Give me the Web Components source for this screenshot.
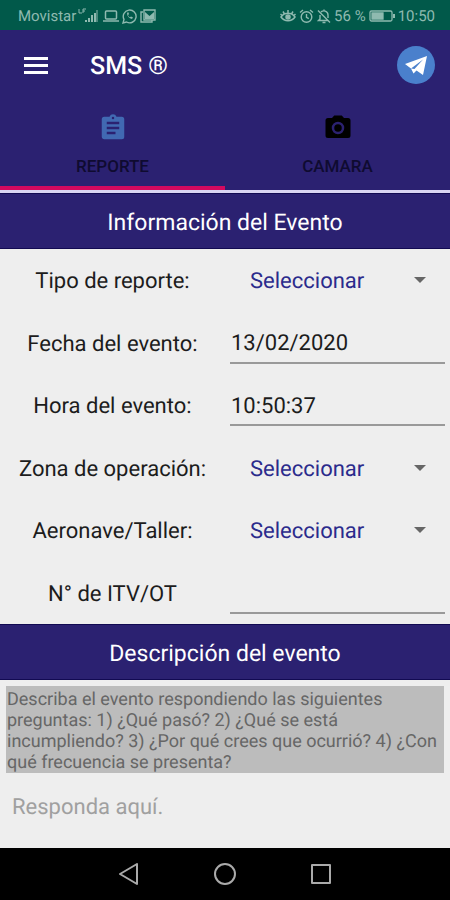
<!DOCTYPE html>
<html lang="es">
<head>
<meta charset="utf-8">
<meta name="viewport" content="width=device-width, initial-scale=1">
<title>SMS ®</title>
<style>
  html, body {
    height: 100%;
    margin: 0;
  }
  body {
    font-family: Roboto, "Liberation Sans", sans-serif;
    text-rendering: geometricPrecision;
    background: #eee;
    color: #1c1c1c;
    --primary: #2b2171;
    --accent: #d4095f;
    --line: #d9d5f2;
  }
</style>
</head>
<body>
<sms-app>
  <status-bar slot="top" carrier="Movistar" battery="56 %" time="10:50"></status-bar>
  <app-bar slot="top" heading="SMS ®"></app-bar>
  <tab-bar slot="top">
    <tab-item label="REPORTE" active>
      <svg width="30" height="30" viewBox="0 0 24 24" fill="#4169b2"><path d="M19 3h-4.2a3 3 0 0 0-5.6 0H5a2 2 0 0 0-2 2v14c0 1.100.9 2 2 2h14a2 2 0 0 0 2-2V5a2 2 0 0 0-2-2zm-7 0a1 1 0 1 1 0 2 1 1 0 0 1 0-2zm2 14H7v-2h7zm3-4H7v-2h10zm0-4H7V7h10z"/></svg>
    </tab-item>
    <tab-item label="CAMARA">
      <svg width="30" height="30" viewBox="0 0 24 24" fill="#000"><circle cx="12" cy="12" r="3.200" fill="none"/><path d="M9 2 7.200 4H4a2 2 0 0 0-2 2v12a2 2 0 0 0 2 2h16a2 2 0 0 0 2-2V6a2 2 0 0 0-2-2h-3.200L15 2zm3 15a5 5 0 1 1 0-10 5 5 0 0 1 0 10z"/><circle cx="12" cy="12" r="3"/></svg>
    </tab-item>
  </tab-bar>

  <section-title>Información del Evento</section-title>
  <event-form>
    <form-row label="Tipo de reporte:" type="select" value="Seleccionar"></form-row>
    <form-row label="Fecha del evento:" value="13/02/2020"></form-row>
    <form-row label="Hora del evento:" value="10:50:37"></form-row>
    <form-row label="Zona de operación:" type="select" value="Seleccionar"></form-row>
    <form-row label="Aeronave/Taller:" type="select" value="Seleccionar"></form-row>
    <form-row label="N° de ITV/OT"></form-row>
  </event-form>
  <section-title>Descripción del evento</section-title>
  <event-description placeholder="Responda aquí.">Describa el evento respondiendo las siguientes preguntas: 1) ¿Qué pasó? 2) ¿Qué se está incumpliendo? 3) ¿Por qué crees que ocurrió? 4) ¿Con qué frecuencia se presenta?</event-description>

  <nav-bar slot="bottom"></nav-bar>
</sms-app>

<script>
// Small base class: attaches the shadow root and fills it with render()
class BaseElement extends HTMLElement {
  constructor() {
    super();
    this.attachShadow({ mode: 'open' });
  }

  connectedCallback() {
    this.shadowRoot.innerHTML = this.render();
  }

  attr(name) {
    return this.getAttribute(name) || '';
  }
}

class SmsApp extends BaseElement {
  render() {
    return `
      <style>
        :host {
          display: flex;
          flex-direction: column;
          height: 100%;
        }
        main {
          flex: 1;
          min-height: 0;
          overflow: hidden;
          display: flex;
          flex-direction: column;
        }
      </style>
      <slot name="top"></slot>
      <main><slot></slot></main>
      <slot name="bottom"></slot>
    `;
  }
}

class StatusBar extends BaseElement {
  render() {
    return `
      <style>
        :host {
          display: flex;
          justify-content: space-between;
          align-items: center;
          flex: none;
          height: 30px;
          padding: 2px 15px 0 18px;
          box-sizing: border-box;
          background: #01594a;
          color: #8fbab0;
          font-size: 15px;
        }
        div {
          display: flex;
          align-items: center;
          gap: 3px;
        }
        .carrier {
          gap: 2px;
        }
        svg {
          display: block;
        }
      </style>
      <div>
        <div class="carrier">
          <span>${this.attr('carrier')}</span>
          <svg width="22" height="16" viewBox="0 0 22 16" fill="currentColor">
            <path d="M1 1v4h3M5 1v4M5 1h3M5 3h2" fill="none" stroke="currentColor"/>
            <path d="M7 12h2v2H7zM10 10h2v4h-2zM13 7h2v7h-2zM16 5h2v9h-2z"/><path d="M18 2h2v12h-2z" opacity=".5"/>
          </svg>
        </div>
        <svg width="16" height="16" viewBox="0 0 16 16" fill="none" stroke="currentColor" stroke-width="1.500"><rect x="2.500" y="3" width="11" height="8" rx="1"/><path d="M0 13h16"/></svg>
        <svg width="15" height="16" viewBox="0 0 15 16" fill="none" stroke="currentColor" stroke-width="1.400"><path d="M1 15l1-3.600A6.400 6.400 0 1 1 4.500 14z"/><path d="M5 5c0 3 2 5.500 5 6l1-1.500-2-1-1 .8C7 9 6.300 8 6 7.200L7 6 6.200 4z" fill="currentColor" stroke="none"/></svg>
        <svg width="16" height="16" viewBox="0 0 16 16" fill="none" stroke="currentColor" stroke-width="1.400"><path d="M3 4H1v10h11v-2M4 2h11v10H4z"/><path d="M5 4l4.500 4L14 4v7H5z" fill="currentColor" stroke="none"/></svg>
      </div>
      <div>
        <svg width="16" height="16" viewBox="0 0 16 16" fill="none" stroke="currentColor" stroke-width="1.500"><path d="M1 9c3.500-5 10.500-5 14 0-3.500 5-10.500 5-14 0zM8 5V2M4.500 6 3 3.500M11.500 6 13 3.500M2 7.500.5 6M14 7.500 15.500 6"/><circle cx="8" cy="9" r="2" fill="currentColor"/></svg>
        <svg width="15" height="16" viewBox="0 0 15 16" fill="none" stroke="currentColor" stroke-width="1.400"><circle cx="7.500" cy="9" r="5.300"/><path d="M7.500 6v3.300l2.300 1.300M1 4.500 4 2M14 4.500 11 2"/></svg>
        <svg width="14" height="16" viewBox="0 0 14 16" fill="none" stroke="currentColor" stroke-width="1.400"><path d="M4 4c2-2 7-1.500 7 3v3M3 7v4l-1.500 1.500H11M1 2.500l12 12M7 1.500V3M5.500 14.500h3"/></svg>
        <span>${this.attr('battery')}</span>
        <svg width="26" height="14" viewBox="0 0 26 14" fill="none" stroke="currentColor" stroke-width="1.300"><rect x="1" y="2" width="22" height="10" rx="1.500"/><path d="M3 4h11v6H3z" fill="currentColor" stroke="currentColor"/><path d="M25 5v4" stroke-width="2"/></svg>
        <span>${this.attr('time')}</span>
      </div>
    `;
  }
}

class AppBar extends BaseElement {
  render() {
    return `
      <style>
        :host {
          display: flex;
          align-items: center;
          flex: none;
          height: 70px;
          padding: 0 15px 0 18px;
          background: var(--primary);
          color: #fff;
        }
        button {
          display: flex;
          align-items: center;
          justify-content: center;
          padding: 0;
          border: none;
          background: none;
          cursor: pointer;
        }
        .menu {
          width: 36px;
          height: 48px;
        }
        h1 {
          flex: 1;
          margin: 0 0 0 36px;
          padding-top: 4px;
          font-size: 25px;
          font-weight: 500;
          line-height: 32px;
        }
      </style>
      <button class="menu" aria-label="Menú">
        <svg width="24" height="18" viewBox="0 0 24 18" fill="#fff"><path d="M0 1h24v3H0zM0 8h24v3H0zM0 15h24v3H0z"/></svg>
      </button>
      <h1>${this.attr('heading')}</h1>
      <button class="send" aria-label="Enviar">
        <svg width="38" height="38" viewBox="0 0 38 38"><circle cx="19" cy="19" r="19" fill="#4a80cc"/><path d="M30 10 8 18l6 4.500 2.500 5 3-3L26 29z" fill="#fff"/><path d="M14 22.500 26 13.500 17.500 23z" fill="#4a80cc"/></svg>
      </button>
    `;
  }
}

class TabBar extends BaseElement {
  render() {
    return `
      <style>
        :host {
          display: flex;
          flex: none;
          height: 90px;
          background: var(--primary);
          border-bottom: 3px solid var(--line);
        }
        ::slotted(tab-item) {
          flex: 1;
        }
      </style>
      <slot></slot>
    `;
  }
}

class TabItem extends BaseElement {
  render() {
    const active = this.hasAttribute('active');
    return `
      <style>
        :host {
          display: flex;
        }
        button {
          flex: 1;
          display: flex;
          flex-direction: column;
          align-items: center;
          gap: 13px;
          padding: 13px 0 0;
          border: none;
          border-bottom: 4px solid transparent;
          background: none;
          color: #0f0b30;
          font: 500 17px/20px Roboto, "Liberation Sans", sans-serif;
          cursor: pointer;
        }
        button.active {
          border-bottom-color: var(--accent);
        }
      </style>
      <button class="${active ? 'active' : ''}" aria-pressed="${active}">
        <slot></slot>
        <span>${this.attr('label')}</span>
      </button>
    `;
  }
}

class SectionTitle extends BaseElement {
  render() {
    return `
      <style>
        :host {
          display: block;
          flex: none;
          background: var(--primary);
          border-top: 1px solid #120a52;
          border-bottom: 1px solid #120a52;
          color: #fff;
        }
        h2 {
          margin: 0;
          padding: 14px 0 10px;
          font-size: 23px;
          font-weight: 400;
          line-height: 30px;
          text-align: center;
        }
      </style>
      <h2><slot></slot></h2>
    `;
  }
}

class EventForm extends BaseElement {
  render() {
    return `
      <style>
        :host {
          display: grid;
          grid-auto-rows: 1fr;
          flex: none;
          min-height: 375px;
        }
      </style>
      <slot></slot>
    `;
  }
}

class FormRow extends BaseElement {
  render() {
    const value = this.attr('value');
    const field = this.getAttribute('type') === 'select'
      ? `<div class="select">
           <select id="field"><option>${value}</option></select>
           <svg width="12" height="6" viewBox="0 0 12 6" fill="#666"><path d="M0 0h12L6 6z"/></svg>
         </div>`
      : `<input id="field" type="text" value="${value}">`;
    return `
      <style>
        :host {
          display: grid;
          grid-template-columns: 1fr 1fr;
          align-items: center;
          font-size: 22px;
          line-height: 30px;
        }
        label {
          padding-top: 4px;
          text-align: center;
        }
        input, select {
          box-sizing: border-box;
          width: 100%;
          border: none;
          border-radius: 0;
          outline: none;
          background: none;
          color: inherit;
          font: inherit;
          text-rendering: inherit;
          appearance: none;
        }
        input {
          height: 42px;
          padding: 4px 1px 0;
          border-bottom: 2px solid #999;
        }
        .field {
          padding: 0 5px;
        }
        .select {
          display: flex;
          align-items: center;
          padding-right: 19px;
        }
        .select svg {
          margin-left: -12px;
          pointer-events: none;
        }
        select {
          flex: 1;
          height: 42px;
          padding: 4px 12px 0 20px;
          color: #2b2b8c;
        }
      </style>
      <label for="field">${this.attr('label')}</label>
      <div class="field">${field}</div>
    `;
  }
}

class EventDescription extends BaseElement {
  render() {
    return `
      <style>
        :host {
          display: flex;
          flex-direction: column;
          flex: 1;
          padding: 6px 6px 0;
        }
        label {
          padding: 3px 0 0 1px;
          background: #bcbcbc;
          color: #666;
          font-size: 18px;
          line-height: 21px;
        }
        textarea {
          flex: 1;
          padding: 20px 6px;
          border: none;
          outline: none;
          resize: none;
          background: none;
          color: #1c1c1c;
          font: 22px/30px Roboto, "Liberation Sans", sans-serif;
          text-rendering: inherit;
        }
        textarea::placeholder {
          color: #a0a0a0;
        }
      </style>
      <label for="answer"><slot></slot></label>
      <textarea id="answer" placeholder="${this.attr('placeholder')}"></textarea>
    `;
  }
}

class NavBar extends BaseElement {
  render() {
    return `
      <style>
        :host {
          display: flex;
          justify-content: center;
          align-items: center;
          gap: 48px;
          flex: none;
          height: 52px;
          background: #000;
        }
        button {
          display: flex;
          align-items: center;
          justify-content: center;
          width: 48px;
          height: 48px;
          padding: 0;
          border: none;
          background: none;
          cursor: pointer;
        }
        svg {
          fill: none;
          stroke: #aaa;
          stroke-width: 2;
          stroke-linejoin: round;
        }
      </style>
      <button aria-label="Atrás"><svg width="22" height="22" viewBox="0 0 22 22"><path d="M19 1v20L2 11z"/></svg></button>
      <button aria-label="Inicio"><svg width="22" height="22" viewBox="0 0 22 22"><circle cx="11" cy="11" r="10"/></svg></button>
      <button aria-label="Recientes"><svg width="22" height="22" viewBox="0 0 22 22"><rect x="2" y="2" width="18" height="18"/></svg></button>
    `;
  }
}

customElements.define('sms-app', SmsApp);
customElements.define('status-bar', StatusBar);
customElements.define('app-bar', AppBar);
customElements.define('tab-bar', TabBar);
customElements.define('tab-item', TabItem);
customElements.define('section-title', SectionTitle);
customElements.define('event-form', EventForm);
customElements.define('form-row', FormRow);
customElements.define('event-description', EventDescription);
customElements.define('nav-bar', NavBar);
</script>
</body>
</html>
